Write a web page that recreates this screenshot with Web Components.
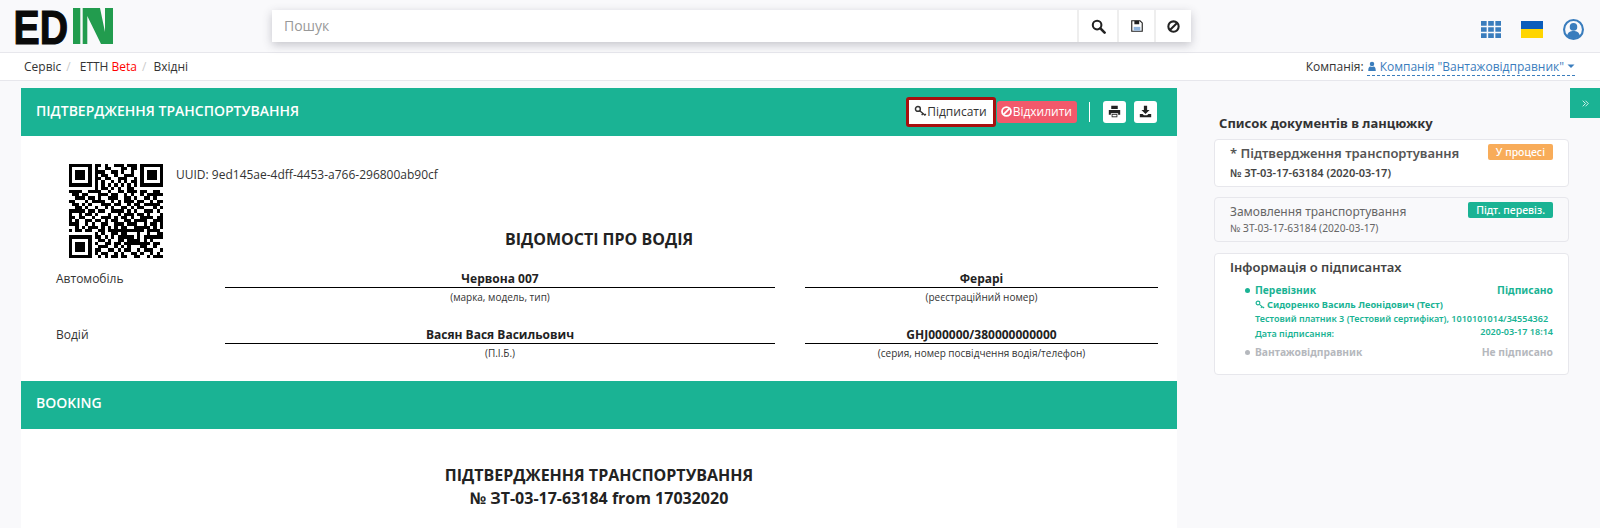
<!DOCTYPE html>
<html lang="uk">
<head>
<meta charset="utf-8">
<title>EDIN</title>
<style>
    html, body { margin: 0; height: 528px; overflow: hidden; }
    body { background: #f9f9fb; color: #333; font: 12px "Open Sans", sans-serif; }
</style>
</head>
<body>
<edi-topbar></edi-topbar>
<edi-crumbs></edi-crumbs>
<edi-layout>
    <edi-panel heading="ПІДТВЕРДЖЕННЯ ТРАНСПОРТУВАННЯ">
        <edi-actions slot="actions"></edi-actions>
        <edi-driver></edi-driver>
    </edi-panel>
    <edi-panel compact heading="BOOKING">
        <edi-booking></edi-booking>
    </edi-panel>
    <edi-chain slot="side"></edi-chain>
</edi-layout>

<script>
const ICONS = {
    search: '<circle cx="6.5" cy="6.5" r="4.6" fill="none" stroke="currentColor" stroke-width="2.200"/><path d="M10 10l4.500 4.500" stroke="currentColor" stroke-width="2.800" stroke-linecap="round"/>',
    save: '<path fill="none" stroke="currentColor" stroke-width="1.300" d="M2 2h9.500L14 4.500V14H2z"/><path fill="currentColor" d="M5 2h5.500v4H5z"/><path fill="#8fb4dd" d="M4.200 9h7.600v4.300H4.200z"/>',
    ban: '<circle cx="8" cy="8" r="5.500" fill="none" stroke="currentColor" stroke-width="2.200"/><path d="M4.200 11.800l7.600-7.600" stroke="currentColor" stroke-width="2.200"/>',
    grid: '<path fill="currentColor" d="M0 0h5.500v4.500H0zM7 0h5.500v4.500H7zM14 0h5.500v4.500H14zM0 6h5.500v4.500H0zM7 6h5.500v4.500H7zM14 6h5.500v4.500H14zM0 12h5.500v4.500H0zM7 12h5.500v4.500H7zM14 12h5.500v4.500H14z"/>',
    user: '<circle cx="8" cy="4" r="3.600" fill="currentColor"/><path fill="currentColor" d="M2 15c0-5.500 1.500-7 3.500-7 1.500 1 3.500 1 5 0 2 0 3.500 1.500 3.500 7z"/>',
    caret: '<path fill="currentColor" d="M1 5h14l-7 7z"/>',
    print: '<path fill="currentColor" d="M4 1h8v4H4zM1 6h14v6h-2.500v-2h-9v2H1zM4.500 11h7v4h-7z"/><path fill="#fff" d="M5.500 12h5v2h-5z"/>',
    download: '<path fill="currentColor" d="M6 1h4v5h3l-5 5-5-5h3zM1 11h3.500l1.500 1.500h4l1.500-1.500H15v4H1z"/>',
    key: '<circle cx="4.800" cy="4.800" r="3" fill="none" stroke="currentColor" stroke-width="1.800"/><path d="M7 7l7 6M11 10.500l-1.500 2M13.500 12.500l1-1.500" fill="none" stroke="currentColor" stroke-width="1.700"/>',
    chevrons: '<path d="M3 3l5 5-5 5M8 3l5 5-5 5" fill="none" stroke="currentColor" stroke-width="1.400"/>'
};

class EdiIcon extends HTMLElement {
    connectedCallback() {
        const size = this.getAttribute('size') || 14;
        const box = this.getAttribute('box') || '0 0 16 16';
        this.attachShadow({ mode: 'open' }).innerHTML = `
            <style>
                :host { display: inline-flex; flex: none; }
                svg { display: block; }
            </style>
            <svg width="${size}" height="${this.getAttribute('h') || size}" viewBox="${box}">${ICONS[this.getAttribute('name')]}</svg>`;
    }
}
customElements.define('edi-icon', EdiIcon);

class EdiLogo extends HTMLElement {
    connectedCallback() {
        this.attachShadow({ mode: 'open' }).innerHTML = `
            <style>
                :host { display: block; width: 98px; height: 36px; }
                svg { display: block; overflow: visible; }
                text { font: 700 48px "Liberation Sans", sans-serif; fill: #0a0a0a; stroke: #0a0a0a; stroke-width: 1.200px; }
            </style>
            <svg width="98" height="36" viewBox="0 0 98 36">
                <text x="-1.500" y="35.500" textLength="54.500" lengthAdjust="spacingAndGlyphs">ED</text>
                <path fill="#229c4e" d="M58 0h7.300v36H58zM67.700 0H85l5 24V0h8v36H86L72.300 8v28h-4.600z"/>
            </svg>`;
    }
}
customElements.define('edi-logo', EdiLogo);

class EdiSearch extends HTMLElement {
    connectedCallback() {
        this.attachShadow({ mode: 'open' }).innerHTML = `
            <style>
                :host {
                    display: flex;
                    width: 919px;
                    height: 32px;
                    background: #fff;
                    box-shadow: 0 3px 9px rgba(60, 60, 80, .28);
                    font-size: 14px;
                }
                .ph { flex: 1; padding-left: 12px; line-height: 32px; color: #999; }
                .btn {
                    width: 35px;
                    display: flex;
                    align-items: center;
                    justify-content: center;
                    border-left: 2px solid #eee;
                    color: #222;
                }
                .btn.s { width: 38px; }
            </style>
            <div class="ph">Пошук</div>
            <div class="btn s"><edi-icon name="search" size="15"></edi-icon></div>
            <div class="btn"><edi-icon name="save" size="14"></edi-icon></div>
            <div class="btn"><edi-icon name="ban" size="15"></edi-icon></div>`;
    }
}
customElements.define('edi-search', EdiSearch);

class EdiTopbar extends HTMLElement {
    connectedCallback() {
        this.attachShadow({ mode: 'open' }).innerHTML = `
            <style>
                :host {
                    display: flex;
                    align-items: flex-start;
                    height: 52px;
                    border-bottom: 1px solid #e7e7ec;
                    box-sizing: content-box;
                }
                edi-logo { margin: 8px 0 0 15px; }
                edi-search { margin: 10px 0 0 159px; }
                .tools { display: flex; align-items: center; margin-left: auto; padding: 19px 16px 0 0; gap: 20px; }
                .grid { color: #3a7dbd; }
                .flag { width: 22px; height: 17px; background: linear-gradient(#0b5dbb 50%, #ffd500 50%); }
                .me { color: #3a7dbd; display: flex; }
            </style>
            <edi-logo></edi-logo>
            <edi-search></edi-search>
            <div class="tools">
                <edi-icon class="grid" name="grid" size="20" h="17" box="0 0 19.500 16.500"></edi-icon>
                <div class="flag"></div>
                <svg class="me" width="21" height="21" viewBox="0 0 20 20">
                    <circle cx="10" cy="10" r="9" fill="none" stroke="currentColor" stroke-width="2"/>
                    <circle cx="10" cy="7.500" r="3.600" fill="currentColor"/>
                    <path d="M3.800 16c1-3.500 3.200-4.500 6.200-4.500s5.200 1 6.200 4.500c-3 3.200-9.400 3.200-12.400 0z" fill="currentColor"/>
                </svg>
            </div>`;
    }
}
customElements.define('edi-topbar', EdiTopbar);

class EdiCrumbs extends HTMLElement {
    connectedCallback() {
        this.attachShadow({ mode: 'open' }).innerHTML = `
            <style>
                :host {
                    display: flex;
                    align-items: center;
                    height: 27px;
                    background: #fff;
                    border-bottom: 1px solid #e7e7ec;
                    padding: 0 25px 0 24px;
                    font-size: 12px;
                    color: #333;
                }
                .sep { color: #ccc; padding: 0 9px 0 5px; }
                .sep.b { padding-right: 7px; }
                .beta { color: #f00; }
                .company { margin-left: auto; display: flex; align-items: center; }
                .link {
                    display: flex;
                    align-items: center;
                    gap: 3px;
                    margin-left: 3px;
                    color: #3a7dbd;
                    border-bottom: 1px dashed #3a7dbd;
                }
            </style>
            <span>Сервіс</span><span class="sep">/</span>
            <span>ЕТТН <span class="beta">Beta</span></span><span class="sep b">/</span>
            <span>Вхідні</span>
            <div class="company">Компанія:
                <div class="link">
                    <edi-icon name="user" size="10" h="11"></edi-icon>
                    <span>Компанія "Вантажовідправник"</span>
                    <edi-icon name="caret" size="8"></edi-icon>
                </div>
            </div>`;
    }
}
customElements.define('edi-crumbs', EdiCrumbs);

class EdiLayout extends HTMLElement {
    connectedCallback() {
        this.attachShadow({ mode: 'open' }).innerHTML = `
            <style>
                :host { display: grid; grid-template-columns: 1156px 392px 31px; padding: 7px 0 0 21px; }
                .side { margin-left: 37px; }
                .tab {
                    width: 30px;
                    height: 30px;
                    margin-left: 1px;
                    background: #1ab394;
                    color: #fff;
                    display: flex;
                    align-items: center;
                    justify-content: center;
                }
            </style>
            <div class="main"><slot></slot></div>
            <div class="side"><slot name="side"></slot></div>
            <div class="tab"><edi-icon name="chevrons" size="9"></edi-icon></div>`;
    }
}
customElements.define('edi-layout', EdiLayout);

class EdiPanel extends HTMLElement {
    connectedCallback() {
        this.attachShadow({ mode: 'open' }).innerHTML = `
            <style>
                :host { display: block; background: #fff; }
                header {
                    display: flex;
                    align-items: flex-start;
                    justify-content: space-between;
                    height: 48px;
                    box-sizing: border-box;
                    background: #1ab394;
                    color: #fff;
                    padding: 0 20px 0 15px;
                }
                h2 { margin: 13px 0 0; font-size: 14px; line-height: 19px; font-weight: 600; }
                :host([compact]) h2 { margin-top: 12px; }
            </style>
            <header>
                <h2>${this.getAttribute('heading')}</h2>
                <slot name="actions"></slot>
            </header>
            <slot></slot>`;
    }
}
customElements.define('edi-panel', EdiPanel);

class EdiActions extends HTMLElement {
    connectedCallback() {
        this.attachShadow({ mode: 'open' }).innerHTML = `
            <style>
                :host { display: flex; align-items: center; height: 48px; margin-top: -1px; padding-top: 1px; box-sizing: border-box; font-size: 12px; }
                .sign {
                    display: flex;
                    align-items: center;
                    height: 24px;
                    padding: 0 6px 0 5px;
                    background: #fff;
                    color: #333;
                    border: 3px solid #a80f0f;
                    border-radius: 3px;
                }
                .ref {
                    display: flex;
                    align-items: center;
                    height: 22px;
                    margin-left: 1px;
                    padding: 0 5px 0 3px;
                    background: #f2596b;
                    color: #fff;
                    border-radius: 3px;
                }
                .rule { width: 1px; height: 20px; background: #fff; margin: 0 13px 0 12px; }
                .sq {
                    display: flex;
                    align-items: center;
                    justify-content: center;
                    width: 23px;
                    height: 22px;
                    background: #fff;
                    color: #222;
                    border-radius: 3px;
                }
                .sq + .sq { margin-left: 8px; }
            </style>
            <div class="sign"><edi-icon name="key" size="13"></edi-icon>Підписати</div>
            <div class="ref"><edi-icon name="ban" size="13"></edi-icon>Відхилити</div>
            <div class="rule"></div>
            <div class="sq"><edi-icon name="print" size="13"></edi-icon></div>
            <div class="sq"><edi-icon name="download" size="13"></edi-icon></div>`;
    }
}
customElements.define('edi-actions', EdiActions);

const QR_ROWS = [
    '11111110110100111011101111111',
    '10000010100110001101101000001',
    '10111010111001101001001011101',
    '10111010101100100111001011101',
    '10111010110110011100101011101',
    '10000010101001010101101000001',
    '11111110101010101010101111111',
    '00000000101101010011000000000',
    '11110011110010011011101100110',
    '01101100011101100101001011111',
    '00111011010011100110100110100',
    '11000101111001010111011001011',
    '01101010001110110010110111110',
    '00110100100101001101011000101',
    '11111011011001111010100111010',
    '10010110100010010111011010001',
    '11011001001110101101001111011',
    '10100110110101100110111100111',
    '11100101001100111011100101101',
    '00101011101010101100111110101',
    '10110110011011111111111011110',
    '00000000101001101100010010011',
    '11111110110101011111010111111',
    '10000010011010011011110101000',
    '10111010100110110111111110110',
    '10111010011100101010001100100',
    '10111010110011010110010111001',
    '10000010101100101001101001010',
    '11111110010101101100110010111'
];

class EdiQr extends HTMLElement {
    connectedCallback() {
        let cells = '';
        QR_ROWS.forEach((row, y) => {
            [...row].forEach((c, x) => {
                if (c === '1') cells += `<rect x="${x}" y="${y}" width="1" height="1"/>`;
            });
        });
        this.attachShadow({ mode: 'open' }).innerHTML = `
            <style>
                :host { display: block; width: 94px; height: 94px; flex: none; }
                svg { display: block; }
            </style>
            <svg width="94" height="94" viewBox="0 0 29 29" shape-rendering="crispEdges" fill="#000">${cells}</svg>`;
    }
}
customElements.define('edi-qr', EdiQr);

class EdiField extends HTMLElement {
    connectedCallback() {
        this.attachShadow({ mode: 'open' }).innerHTML = `
            <style>
                :host { display: block; text-align: center; }
                .v { font-weight: 700; font-size: 12px; line-height: 17px; height: 17px; border-bottom: 1px solid #000; color: #222; }
                .c { font-size: 10px; line-height: 19px; color: #333; }
            </style>
            <div class="v">${this.getAttribute('value')}</div>
            <div class="c">${this.getAttribute('caption')}</div>`;
    }
}
customElements.define('edi-field', EdiField);

class EdiDriver extends HTMLElement {
    connectedCallback() {
        this.attachShadow({ mode: 'open' }).innerHTML = `
            <style>
                :host { display: block; height: 245px; padding: 0 19px 0 35px; box-sizing: border-box; }
                .top { display: flex; padding: 28px 0 0 13px; }
                .uuid { margin: 2px 0 0 13px; line-height: 17px; font-size: 12px; color: #333; }
                h3 { margin: -30px 0 0; padding-right: 16px; font-size: 16px; line-height: 22px; font-weight: 700; text-align: center; color: #222; }
                .rows { display: grid; grid-template-columns: 169px 550px 383px; row-gap: 19px; margin-top: 20px; }
                .rows edi-field:nth-child(3n) { margin-left: 30px; }
                .label { line-height: 17px; font-size: 12px; color: #333; }
            </style>
            <div class="top">
                <edi-qr></edi-qr>
                <div class="uuid">UUID: 9ed145ae-4dff-4453-a766-296800ab90cf</div>
            </div>
            <h3>ВІДОМОСТІ ПРО ВОДІЯ</h3>
            <div class="rows">
                <div class="label">Автомобіль</div>
                <edi-field value="Червона 007" caption="(марка, модель, тип)"></edi-field>
                <edi-field value="Ферарі" caption="(реєстраційний номер)"></edi-field>
                <div class="label">Водій</div>
                <edi-field value="Васян Вася Васильович" caption="(П.І.Б.)"></edi-field>
                <edi-field value="GHJ000000/380000000000" caption="(серия, номер посвідчення водія/телефон)"></edi-field>
            </div>`;
    }
}
customElements.define('edi-driver', EdiDriver);

class EdiBooking extends HTMLElement {
    connectedCallback() {
        this.attachShadow({ mode: 'open' }).innerHTML = `
            <style>
                :host { display: block; height: 99px; box-sizing: border-box; padding-top: 35px; text-align: center; font-size: 16px; line-height: 23px; font-weight: 700; color: #222; }
            </style>
            <div>ПІДТВЕРДЖЕННЯ ТРАНСПОРТУВАННЯ</div>
            <div>№ ЗТ-03-17-63184 from 17032020</div>`;
    }
}
customElements.define('edi-booking', EdiBooking);

class EdiBadge extends HTMLElement {
    connectedCallback() {
        this.attachShadow({ mode: 'open' }).innerHTML = `
            <style>
                :host {
                    display: block;
                    flex: none;
                    height: 16px;
                    padding: 0 8px;
                    border-radius: 2px;
                    color: #fff;
                    font-size: 10.500px;
                    font-weight: 500;
                    line-height: 16px;
                    background: var(--badge, #1ab394);
                }
            </style>
            <slot></slot>`;
    }
}
customElements.define('edi-badge', EdiBadge);

class EdiCard extends HTMLElement {
    connectedCallback() {
        this.attachShadow({ mode: 'open' }).innerHTML = `
            <style>
                :host {
                    display: block;
                    margin-bottom: 10px;
                    padding: 4px 15px 6px;
                    background: #fff;
                    border: 1px solid #e7e7ec;
                    border-radius: 4px;
                }
                :host([muted]) { background: #f9f9fb; color: #666; margin-bottom: 11px; padding-bottom: 5px; }
                .row { display: flex; justify-content: space-between; align-items: flex-start; }
                .name { font-size: 13px; line-height: 19px; font-weight: 600; color: #555; }
                .num { font-size: 11px; line-height: 15px; margin-top: 2px; font-weight: 600; color: #444; }
                :host([muted]) .name { font-size: 12px; font-weight: 400; color: #666; }
                :host([muted]) .num { font-size: 10.200px; margin-top: 0; font-weight: 400; color: #666; }
            </style>
            <div class="row">
                <div class="name">${this.getAttribute('name')}</div>
                <slot></slot>
            </div>
            <div class="num">${this.getAttribute('number')}</div>`;
    }
}
customElements.define('edi-card', EdiCard);

class EdiSigner extends HTMLElement {
    connectedCallback() {
        this.attachShadow({ mode: 'open' }).innerHTML = `
            <style>
                :host { display: block; position: relative; padding-left: 25px; color: var(--tone); font-weight: 600; }
                .bullet {
                    position: absolute;
                    left: 15px;
                    top: 6px;
                    width: 5px;
                    height: 5px;
                    border-radius: 50%;
                    background: var(--tone);
                }
                .head { display: flex; justify-content: space-between; font-size: 10.300px; line-height: 16px; font-weight: 700; }
            </style>
            <span class="bullet"></span>
            <div class="head"><span>${this.getAttribute('role')}</span><span>${this.getAttribute('state')}</span></div>
            <slot></slot>`;
    }
}
customElements.define('edi-signer', EdiSigner);

class EdiSignerInfo extends HTMLElement {
    connectedCallback() {
        this.attachShadow({ mode: 'open' }).innerHTML = `
            <style>
                :host { display: block; font-size: 9.050px; line-height: 14px; font-weight: 600; }
                .who { display: flex; align-items: center; gap: 2px; font-size: 9.250px; font-weight: 700; }
                .cert { white-space: nowrap; }
                .date { display: flex; justify-content: space-between; margin-top: 1px; }
                .date span + span { margin-top: -2px; }
            </style>
            <div class="who"><edi-icon name="key" size="10"></edi-icon>Сидоренко Василь Леонідович (Тест)</div>
            <div class="cert">Тестовий платник 3 (Тестовий сертифікат), 1010101014/34554362</div>
            <div class="date"><span>Дата підписання:</span><span>2020-03-17 18:14</span></div>`;
    }
}
customElements.define('edi-signer-info', EdiSignerInfo);

class EdiChain extends HTMLElement {
    connectedCallback() {
        this.attachShadow({ mode: 'open' }).innerHTML = `
            <style>
                :host { display: block; padding-top: 25px; font-family: "Noto Sans", sans-serif; }
                h4 { margin: 0 0 5px 5px; font-size: 13px; line-height: 21px; font-weight: 700; color: #333; height: 21px; }
                .signers {
                    background: #fff;
                    border: 1px solid #e7e7ec;
                    border-radius: 4px;
                    padding: 4px 15px 13px;
                    height: 122px;
                    box-sizing: border-box;
                }
                .signers h5 { margin: 0 0 5px; font-size: 13px; line-height: 19px; font-weight: 600; color: #444; }
                .ok { --tone: #1ab394; }
                .no { --tone: #b5b8bd; margin-top: 3px; }
            </style>
            <h4>Список документів в ланцюжку</h4>
            <edi-card name="* Підтвердження транспортування" number="№ ЗТ-03-17-63184 (2020-03-17)">
                <edi-badge style="--badge:#f8ac59">У процесі</edi-badge>
            </edi-card>
            <edi-card muted name="Замовлення транспортування" number="№ ЗТ-03-17-63184 (2020-03-17)">
                <edi-badge>Підт. перевіз.</edi-badge>
            </edi-card>
            <div class="signers">
                <h5>Інформація о підписантах</h5>
                <edi-signer class="ok" role="Перевізник" state="Підписано"><edi-signer-info></edi-signer-info></edi-signer>
                <edi-signer class="no" role="Вантажовідправник" state="Не підписано"></edi-signer>
            </div>`;
    }
}
customElements.define('edi-chain', EdiChain);
</script>
</body>
</html>
